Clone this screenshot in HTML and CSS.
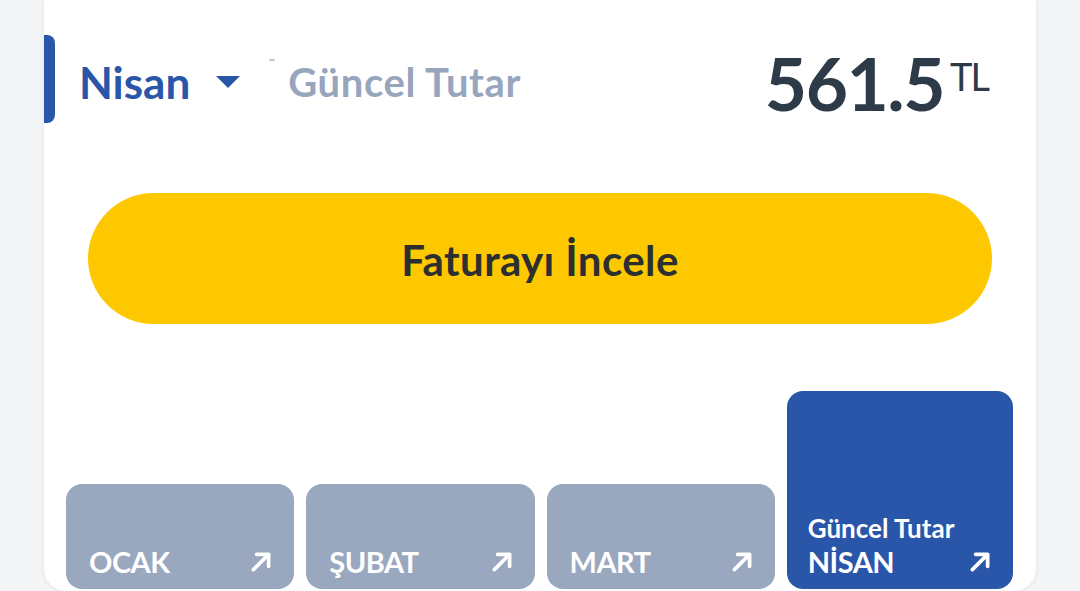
FILE: index.html
```html
<!DOCTYPE html>
<html lang="tr">
<head>
    <meta charset="UTF-8">
    <meta name="viewport" content="width=device-width, initial-scale=1.0">
    <title>Fatura</title>
    <link rel="stylesheet" href="styles.css">
</head>
<body>
    <div class="card">
        <!-- Header: selected month + current amount -->
        <div class="bill-head">
            <span class="accent"></span>
            <div class="month-select">
                <span class="month">Nisan</span>
                <svg class="caret" width="26" height="14" viewBox="0 0 26 14"><path d="M1 1 L25 1 L13 13 Z" fill="#2a56a9"/></svg>
            </div>
            <span class="dash"></span>
            <span class="label">Güncel Tutar</span>
            <div class="amount">561.5<sup>TL</sup></div>
        </div>

        <button class="review-btn">Faturayı İncele</button>

        <!-- Month tiles -->
        <div class="months">
            <div class="tile">
                <div class="tile-foot">
                    <span class="tile-name">OCAK</span>
                    <svg class="arrow" viewBox="0 0 22 22"><path d="M4 18 L18 4 M7 4 L18 4 L18 15" /></svg>
                </div>
            </div>
            <div class="tile">
                <div class="tile-foot">
                    <span class="tile-name">ŞUBAT</span>
                    <svg class="arrow" viewBox="0 0 22 22"><path d="M4 18 L18 4 M7 4 L18 4 L18 15" /></svg>
                </div>
            </div>
            <div class="tile">
                <div class="tile-foot">
                    <span class="tile-name">MART</span>
                    <svg class="arrow" viewBox="0 0 22 22"><path d="M4 18 L18 4 M7 4 L18 4 L18 15" /></svg>
                </div>
            </div>
            <div class="tile active">
                <span class="tile-sub">Güncel Tutar</span>
                <div class="tile-foot">
                    <span class="tile-name">NİSAN</span>
                    <svg class="arrow" viewBox="0 0 22 22"><path d="M4 18 L18 4 M7 4 L18 4 L18 15" /></svg>
                </div>
            </div>
        </div>
    </div>
</body>
</html>
```

FILE: styles.css
```css
* {
    margin: 0;
    padding: 0;
    box-sizing: border-box;
    font-family: 'Lato', 'Noto Sans', sans-serif;
}
body {
    background: #f4f5f7;
    width: 1080px;
    height: 591px;
    overflow: hidden;
}
.card {
    width: 992px;
    height: 591px;
    margin-left: 44px;
    background: #fff;
    border-radius: 0 0 22px 22px;
    box-shadow: 0 0 6px rgba(0, 0, 0, 0.08);
    padding-top: 35px;
}
.bill-head {
    display: flex;
    align-items: center;
    height: 88px;
    padding-right: 48px;
}
.accent {
    width: 11px;
    height: 88px;
    background: #2a56a9;
    border-radius: 0 8px 8px 0;
}
.month-select {
    display: flex;
    align-items: center;
    margin-left: 24px;
    margin-top: 5px;
}
.month {
    font-size: 44px;
    font-weight: 700;
    color: #2a56a9;
}
.caret {
    margin-left: 25px;
    margin-top: 0;
}
.dash {
    width: 6px;
    height: 2px;
    background: #c2c8d2;
    margin-left: 28px;
    align-self: flex-start;
    margin-top: 24px;
}
.label {
    font-size: 40px;
    font-weight: 700;
    color: #97a5bd;
    margin-left: 13px;
    margin-top: 5px;
    letter-spacing: 0.6px;
}
.amount {
    margin-left: auto;
    font-size: 73px;
    font-weight: 700;
    color: #2d3a48;
    letter-spacing: -1.5px;
    display: flex;
    align-items: flex-start;
    margin-top: 8px;
}
.amount sup {
    font-size: 38px;
    font-weight: 400;
    margin-left: 6px;
    margin-top: 18px;
    letter-spacing: -2px;
    line-height: 1;
}
.review-btn {
    display: block;
    width: 904px;
    height: 131px;
    margin: 70px auto 0;
    border: none;
    border-radius: 66px;
    background: #fdc800;
    color: #2b2f30;
    font-size: 42px;
    font-weight: 700;
    letter-spacing: 0.4px;
    padding-top: 2px;
    cursor: pointer;
}
.months {
    display: flex;
    align-items: flex-end;
    gap: 12px;
    padding: 0 23px 0 22px;
    margin-top: 67px;
}
.tile {
    flex: 1;
    height: 105px;
    background: #99a7bf;
    border-radius: 16px;
    padding: 0 21px 10px 23px;
    display: flex;
    flex-direction: column;
    justify-content: flex-end;
    color: #fff;
}
.tile.active {
    height: 198px;
    background: #2a56a9;
    padding-left: 21px;
}
.tile-sub {
    font-size: 26px;
    font-weight: 700;
    margin-bottom: 0;
}
.tile-foot {
    display: flex;
    align-items: center;
    justify-content: space-between;
}
.tile-name {
    font-size: 29px;
    font-weight: 700;
    letter-spacing: -0.5px;
}
.arrow {
    width: 24px;
    height: 24px;
    fill: none;
    stroke: #fff;
    stroke-width: 3.4;
    stroke-linecap: round;
    stroke-linejoin: round;
}
```
